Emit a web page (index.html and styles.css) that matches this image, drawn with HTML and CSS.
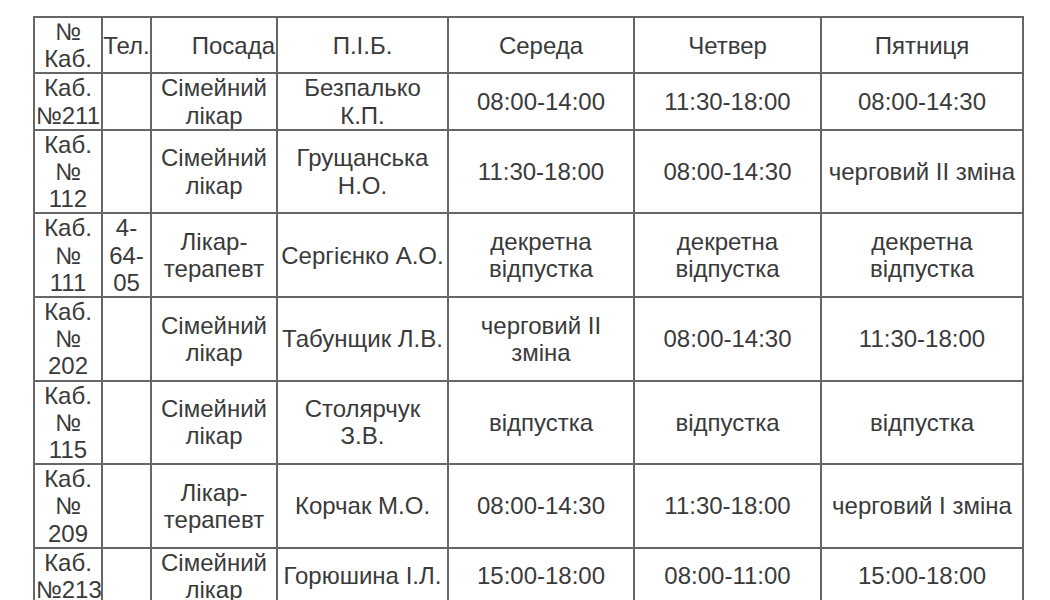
FILE: index.html
```html
<!DOCTYPE html>
<html lang="uk">
<head>
<meta charset="utf-8">
<title>Розклад</title>
<link rel="stylesheet" href="styles.css">
</head>
<body>
<table class="schedule">
  <colgroup>
    <col class="c-room">
    <col class="c-tel">
    <col class="c-pos">
    <col class="c-name">
    <col class="c-day1">
    <col class="c-day2">
    <col class="c-day3">
  </colgroup>
  <tr>
    <td>№ Каб.</td>
    <td class="nowrap">Тел.</td>
    <td class="right">Посада</td>
    <td>П.І.Б.</td>
    <td>Середа</td>
    <td>Четвер</td>
    <td>Пятниця</td>
  </tr>
  <tr>
    <td>Каб. <span class="nowrap">№211</span></td>
    <td></td>
    <td>Сімейний лікар</td>
    <td>Безпалько К.П.</td>
    <td>08:00-14:00</td>
    <td>11:30-18:00</td>
    <td>08:00-14:30</td>
  </tr>
  <tr>
    <td>Каб. № 112</td>
    <td></td>
    <td>Сімейний лікар</td>
    <td>Грущанська Н.О.</td>
    <td>11:30-18:00</td>
    <td>08:00-14:30</td>
    <td>черговий ІІ зміна</td>
  </tr>
  <tr>
    <td>Каб. № 111</td>
    <td>4-64-05</td>
    <td>Лікар-терапевт</td>
    <td>Сергієнко А.О.</td>
    <td>декретна відпустка</td>
    <td>декретна відпустка</td>
    <td>декретна відпустка</td>
  </tr>
  <tr>
    <td>Каб. № 202</td>
    <td></td>
    <td>Сімейний лікар</td>
    <td>Табунщик Л.В.</td>
    <td>черговий ІІ зміна</td>
    <td>08:00-14:30</td>
    <td>11:30-18:00</td>
  </tr>
  <tr>
    <td>Каб. № 115</td>
    <td></td>
    <td>Сімейний лікар</td>
    <td>Столярчук<br>З.В.</td>
    <td>відпустка</td>
    <td>відпустка</td>
    <td>відпустка</td>
  </tr>
  <tr>
    <td>Каб. № 209</td>
    <td></td>
    <td>Лікар-терапевт</td>
    <td>Корчак М.О.</td>
    <td>08:00-14:30</td>
    <td>11:30-18:00</td>
    <td>черговий І зміна</td>
  </tr>
  <tr>
    <td>Каб. <span class="nowrap">№213</span></td>
    <td></td>
    <td>Сімейний лікар</td>
    <td>Горюшина І.Л.</td>
    <td>15:00-18:00</td>
    <td>08:00-11:00</td>
    <td>15:00-18:00</td>
  </tr>
</table>
</body>
</html>
```

FILE: styles.css
```css
html, body {
  margin: 0;
  padding: 0;
  background: #ffffff;
}

body {
  padding: 16px 0 0 33px;
  font-family: "Liberation Sans", Arial, sans-serif;
  color: #3a3a3a;
}

.schedule {
  border-collapse: collapse;
  table-layout: fixed;
  width: 991px;
  font-size: 24px;
  line-height: 27.2px;
}

.schedule td {
  border: 2px solid #666666;
  padding: 0 1px;
  text-align: center;
  vertical-align: middle;
  word-wrap: break-word;
}

.schedule td.right {
  text-align: right;
}

.nowrap {
  white-space: nowrap;
}

.schedule td.nowrap {
  padding: 0;
}

.c-room { width: 68px; }
.c-tel { width: 49px; }
.c-pos { width: 126px; }
.c-name { width: 171px; }
.c-day1 { width: 186px; }
.c-day2 { width: 187px; }
.c-day3 { width: 202px; }
```
